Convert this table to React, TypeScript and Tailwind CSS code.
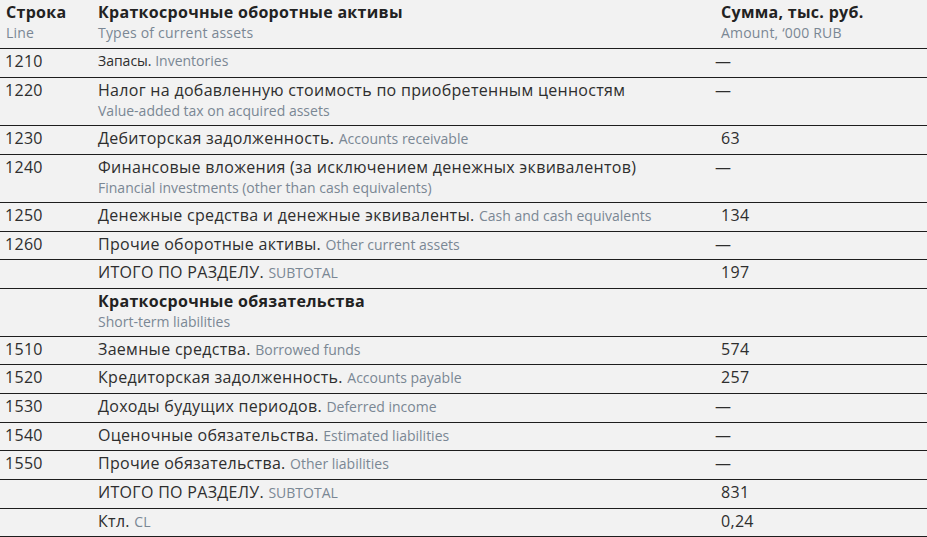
import React from "react";

type Row = {
  code?: string;
  ru: string;
  en: string;
  amount?: string;
  h: string;
  stacked?: boolean;
  small?: boolean;
  bold?: boolean;
};

const rows: Row[] = [
  { code: "1210", ru: "Запасы.", en: "Inventories", amount: "—", small: true, h: "h-[29px]" },
  { code: "1220", ru: "Налог на добавленную стоимость по приобретенным ценностям", en: "Value-added tax on acquired assets", amount: "—", stacked: true, h: "h-[48px]" },
  { code: "1230", ru: "Дебиторская задолженность.", en: "Accounts receivable", amount: "63", h: "h-[29px]" },
  { code: "1240", ru: "Финансовые вложения (за исключением денежных эквивалентов)", en: "Financial investments (other than cash equivalents)", amount: "—", stacked: true, h: "h-[48px]" },
  { code: "1250", ru: "Денежные средства и денежные эквиваленты.", en: "Cash and cash equivalents", amount: "134", h: "h-[29px]" },
  { code: "1260", ru: "Прочие оборотные активы.", en: "Other current assets", amount: "—", h: "h-[28px]" },
  { ru: "ИТОГО ПО РАЗДЕЛУ.", en: "SUBTOTAL", amount: "197", h: "h-[29px]" },
  { ru: "Краткосрочные обязательства", en: "Short-term liabilities", stacked: true, bold: true, h: "h-[48px]" },
  { code: "1510", ru: "Заемные средства.", en: "Borrowed funds", amount: "574", h: "h-[28px]" },
  { code: "1520", ru: "Кредиторская задолженность.", en: "Accounts payable", amount: "257", h: "h-[29px]" },
  { code: "1530", ru: "Доходы будущих периодов.", en: "Deferred income", amount: "—", h: "h-[29px]" },
  { code: "1540", ru: "Оценочные обязательства.", en: "Estimated liabilities", amount: "—", h: "h-[28px]" },
  { code: "1550", ru: "Прочие обязательства.", en: "Other liabilities", amount: "—", h: "h-[29px]" },
  { ru: "ИТОГО ПО РАЗДЕЛУ.", en: "SUBTOTAL", amount: "831", h: "h-[29px]" },
  { ru: "Ктл.", en: "CL", amount: "0,24", h: "h-[28px]" },
];

export default function App() {
  return (
    <div
      className="w-[927px] h-[537px] bg-[#f2f2f2] text-[#2e2e2e] overflow-hidden"
      style={{ fontFamily: '"Open Sans", "Noto Sans", sans-serif' }}
    >
      <div className="grid grid-cols-[98px_623px_1fr] h-[49px] border-b border-[#1e1e1e] pt-[1px]">
        <div className="pl-[6px]">
          <div className="text-[16px] leading-[22px] tracking-[0.3px] font-bold text-[#222]">Строка</div>
          <div className="text-[14px] leading-[20px] tracking-[0.2px] text-[#7a8794]">Line</div>
        </div>
        <div>
          <div className="text-[16px] leading-[22px] tracking-[0.3px] font-bold text-[#222]">Краткосрочные оборотные активы</div>
          <div className="text-[14px] leading-[20px] tracking-[0.2px] text-[#7a8794]">Types of current assets</div>
        </div>
        <div>
          <div className="text-[16px] leading-[22px] tracking-[0.3px] font-bold text-[#222]">Сумма, тыс. руб.</div>
          <div className="text-[14px] leading-[20px] tracking-[0.2px] text-[#7a8794]">Amount, ‘000 RUB</div>
        </div>
      </div>
      {rows.map((r, i) => (
        <div
          key={i}
          className={"grid grid-cols-[98px_623px_1fr] border-b border-[#1e1e1e] pt-[2px] " + r.h}
        >
          <div className="pl-[5px] text-[16px] leading-[20px] tracking-[0.3px]">{r.code}</div>
          <div>
            {r.stacked ? (
              <>
                <div
                  className={
                    "text-[16px] leading-[20px] tracking-[0.3px] " + (r.bold ? "font-bold text-[#222]" : "")
                  }
                >
                  {r.ru}
                </div>
                <div className="text-[14px] leading-[21px] text-[#7a8794]">{r.en}</div>
              </>
            ) : (
              <div
                className={
                  r.small
                    ? "text-[14px] leading-[20px]"
                    : "text-[16px] leading-[20px] tracking-[0.3px]"
                }
              >
                {r.ru}{" "}
                <span className="text-[14px] tracking-normal text-[#7a8794]">{r.en}</span>
              </div>
            )}
          </div>
          <div className="text-[16px] leading-[20px] tracking-[0.3px]">
            {r.amount === "—" ? <span className="-ml-[6px]">—</span> : r.amount}
          </div>
        </div>
      ))}
    </div>
  );
}
